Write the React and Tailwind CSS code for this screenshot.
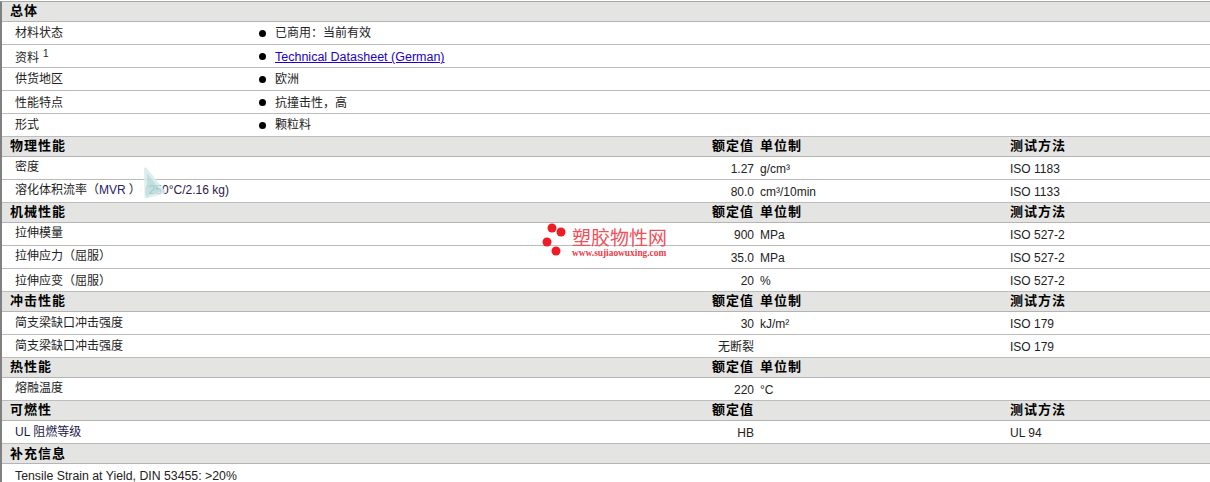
const font = "font-['Liberation_Sans','Noto_Sans_CJK_SC',sans-serif]";

function Header({ title, rated, unit, method, tight }) {
  return (
    <div className={`flex h-5 items-center border-b border-[#b4b4b4] bg-[#e4e4e2] text-[13px] leading-none font-bold tracking-[1px] text-black ${tight ? "" : "pb-[2px]"}`}>
      <div className="flex-1 pl-2">{title}</div>
      <div className="w-[55px] text-right">{rated ? "额定值" : ""}</div>
      <div className="ml-[6px] w-[250px]">{unit ? "单位制" : ""}</div>
      <div className="w-[200px]">{method ? "测试方法" : ""}</div>
    </div>
  );
}

function InfoRow({ label, sup, children, shift, low }) {
  return (
    <div className="flex h-[23px] items-center border-b border-[#bcbcbc] text-xs leading-none text-[#222]">
      <div className={`w-[255px] pl-[13px] ${shift ? "pt-[3px]" : ""} ${low ? "pt-[1px]" : ""}`}>
        {label}
        {sup && <sup className="relative -top-[5px] ml-[4px] text-[10px]">{sup}</sup>}
      </div>
      <div className="ml-[2px] h-[7px] w-[7px] rounded-full bg-black" />
      <div className={`ml-[9px] ${shift ? "pt-[3px]" : ""} ${low ? "pt-[1px]" : ""}`}>{children}</div>
    </div>
  );
}

function DataRow({ label, value, unit, method, labelTop = "pt-[4px]", valueClass = "" }) {
  return (
    <div className="flex h-[23px] border-b border-[#bcbcbc] text-xs leading-none text-[#222]">
      <div className={`flex-1 pl-[13px] ${labelTop}`}>{label}</div>
      <div className={`w-[55px] pt-[6px] text-right ${valueClass}`}>{value}</div>
      <div className="ml-[6px] w-[250px] pt-[6px]">{unit}</div>
      <div className="w-[200px] pt-[6px]">{method}</div>
    </div>
  );
}

export default function App() {
  return (
    <div className={`relative h-[482px] w-[1210px] overflow-hidden bg-white pt-px ${font}`}>
      <div className="border-t border-l-2 border-[#a8a8a8] border-l-[#808080]">
        <Header title="总体" />
        <InfoRow label="材料状态">已商用：当前有效</InfoRow>
        <InfoRow label="资料" sup="1" shift>
          <a href="#" className="text-[12.5px] text-[#2200cc] underline">Technical Datasheet (German)</a>
        </InfoRow>
        <InfoRow label="供货地区">欧洲</InfoRow>
        <InfoRow label="性能特点" low>抗撞击性，高</InfoRow>
        <InfoRow label="形式">颗粒料</InfoRow>

        <Header title="物理性能" rated unit method />
        <DataRow label="密度" value="1.27" unit="g/cm³" method="ISO 1183" />
        <DataRow
          label={<>溶化体积流率（<span className="text-[#2a1a6a]">MVR</span><span className="ml-[3px]">）</span><span className="ml-[4px] text-[#2a1a4a]">(250°C/2.16 kg)</span></>}
          value="80.0"
          unit="cm³/10min"
          method="ISO 1133"
        />

        <Header title="机械性能" rated unit method />
        <DataRow label="拉伸模量" value="900" unit="MPa" method="ISO 527-2" />
        <DataRow label="拉伸应力（屈服）" value="35.0" unit="MPa" method="ISO 527-2" />
        <DataRow label="拉伸应变（屈服）" labelTop="pt-[6px]" value="20" unit="%" method="ISO 527-2" />

        <Header title="冲击性能" rated unit method />
        <DataRow label="简支梁缺口冲击强度" labelTop="pt-[5px]" value="30" unit="kJ/m²" method="ISO 179" />
        <DataRow label="简支梁缺口冲击强度" labelTop="pt-[5px]" value="无断裂" unit="" method="ISO 179" valueClass="pt-[4px]" />

        <Header title="热性能" rated unit />
        <DataRow label="熔融温度" value="220" unit="°C" />

        <Header title="可燃性" rated method />
        <DataRow label={<span className="text-[#1a1a4a]">UL 阻燃等级</span>} labelTop="pt-[5px]" value="HB" method="UL 94" />

        <Header title="补充信息" tight />
        <div className="h-[23px] pt-[6px] pl-[13px] text-[12.3px] leading-none text-[#222]">
          Tensile Strain at Yield, DIN 53455: &gt;20%
        </div>
      </div>

      {/* translucent play arrow over the page */}
      <svg className="absolute top-[166px] left-[142px]" width="26" height="34" viewBox="0 0 26 34">
        <path d="M3.5 3 L22 26 L4 31 Z" fill="#b8dcdc" stroke="#d8ecec" strokeWidth="3" strokeLinejoin="round" opacity="0.88" />
      </svg>

      {/* watermark */}
      <div className="absolute top-[221px] left-[540px] flex items-start">
        <svg width="32" height="36" viewBox="0 0 32 36" className="mt-[1px]">
          <circle cx="12" cy="6" r="4.5" fill="#ee1c25" />
          <circle cx="21" cy="10" r="4.5" fill="#ee1c25" />
          <circle cx="7" cy="20" r="4.5" fill="#ee1c25" />
          <circle cx="16" cy="29" r="4.5" fill="#ee1c25" />
        </svg>
        <div className="flex flex-col">
          <span className="mt-[8px] text-[19px] leading-[19px] font-normal whitespace-nowrap text-[#f0505a]">塑胶物性网</span>
          <span className="mt-[1px] font-['Liberation_Serif',serif] text-[9.4px] leading-[9px] font-bold whitespace-nowrap text-[#e8404a]">www.sujiaowuxing.com</span>
        </div>
      </div>
    </div>
  );
}
